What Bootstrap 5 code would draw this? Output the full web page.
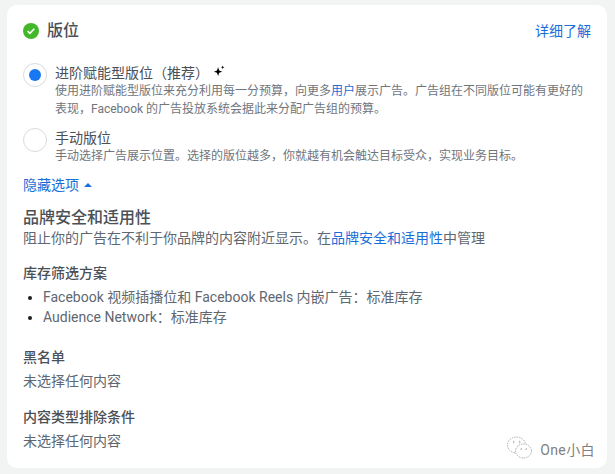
<!DOCTYPE html>
<html lang="zh-CN">
<head>
    <meta charset="UTF-8">
    <title>版位</title>
    <link rel="stylesheet" href="https://cdn.jsdelivr.net/npm/bootstrap@5.3.0/dist/css/bootstrap.min.css">
    <style>
        html, body { height: 100%; overflow: hidden; }
        body {
            background: #f2f3f3;
            font-family: Roboto, "Noto Sans CJK SC", sans-serif;
            color: #606770;
            font-size: 14px;
            line-height: 20px;
        }
        a { color: #1a6ed8; text-decoration: none; }
        .page-wrap { padding: 5px 8px 6px 7px; height: 474px; }
        .place-card {
            background: #fff;
            border-radius: 10px;
            height: 463px;
            padding: 16px 16px 0;
            position: relative;
        }
        .title-row { height: 20px; margin-bottom: 23px; }
        .title-text { font-size: 16px; font-weight: 500; color: #4b4f56; }
        .check-icon { width: 16px; height: 16px; display: block; }
        .radio-ring {
            width: 24px;
            height: 24px;
            border: 1px solid #d8dadd;
            border-radius: 50%;
            flex: none;
            margin-top: -1px;
        }
        .radio-dot { width: 12px; height: 12px; background: #1877f2; border-radius: 50%; }
        .opt-title { font-size: 14px; line-height: 19px; color: #4b4f56; }
        .opt-desc { font-size: 12px; line-height: 17.5px; color: #70757c; }
        .opt-row { margin-bottom: 11px; }
        .spark-icon { width: 12px; height: 12px; margin-left: 4px; vertical-align: 1px; }
        .hide-link { line-height: 18px; margin-top: -1px; }
        .caret-up {
            display: inline-block;
            border-left: 4px solid transparent;
            border-right: 4px solid transparent;
            border-bottom: 4px solid #1a6ed8;
            margin-left: 5px;
            vertical-align: 3px;
        }
        .brand-head { font-size: 16px; font-weight: 500; color: #4b4f56; line-height: 20px; margin: 14px 0 0; }
        .sub-head { font-size: 14px; font-weight: 500; color: #4b4f56; line-height: 20px; margin: 0; }
        .brand-note { margin-bottom: 15px; }
        .inv-list { padding-left: 20px; margin: 4px 0 20px; }
        .inv-list li { line-height: 20px; }
        .inv-list li::marker { color: #1c1e21; }
        .block-val { margin-top: 4px; margin-bottom: 16px; }
        .wm-box {
            position: absolute;
            right: 12px;
            bottom: 7px;
            color: #808080;
            font-size: 14px;
            letter-spacing: 0.4px;
            background: #fff;
        }
        .wm-box svg { width: 27px; height: 26px; margin-right: 7px; margin-top: -3px; }
    </style>
</head>
<body>
    <div class="page-wrap">
        <div class="place-card">
            <div class="d-flex align-items-center justify-content-between title-row">
                <div class="d-flex align-items-center gap-2">
                    <svg class="check-icon" viewBox="0 0 16 16">
                        <circle cx="8" cy="8" r="8" fill="#42b72a"/>
                        <path d="M4.6 8.2l2.3 2.2 4.4-4.6" fill="none" stroke="#fff" stroke-width="1.6"/>
                    </svg>
                    <span class="title-text">版位</span>
                </div>
                <a href="#">详细了解</a>
            </div>

            <div class="d-flex gap-2 opt-row">
                <div class="radio-ring d-flex align-items-center justify-content-center">
                    <div class="radio-dot"></div>
                </div>
                <div>
                    <div class="opt-title">进阶赋能型版位（推荐）<svg class="spark-icon" viewBox="0 0 13 13"><path d="M5.5 2.5L6.7 6l3.300 1.200-3.300 1.200L5.500 12 4.300 8.400 1 7.200 4.300 6z" fill="#000"/><path d="M10.500 0.500l.5 1.500 1.500.5-1.500.5-.5 1.500-.5-1.500L8.500 2.500l1.500-.5z" fill="#000"/></svg></div>
                    <div class="opt-desc">使用进阶赋能型版位来充分利用每一分预算，向更多<a href="#">用户</a>展示广告。广告组在不同版位可能有更好的表现，Facebook 的广告投放系统会据此来分配广告组的预算。</div>
                </div>
            </div>

            <div class="d-flex gap-2 opt-row">
                <div class="radio-ring"></div>
                <div>
                    <div class="opt-title">手动版位</div>
                    <div class="opt-desc">手动选择广告展示位置。选择的版位越多，你就越有机会触达目标受众，实现业务目标。</div>
                </div>
            </div>

            <div class="hide-link"><a href="#">隐藏选项<span class="caret-up"></span></a></div>

            <h2 class="brand-head">品牌安全和适用性</h2>
            <div class="brand-note">阻止你的广告在不利于你品牌的内容附近显示。在<a href="#">品牌安全和适用性</a>中管理</div>

            <h3 class="sub-head">库存筛选方案</h3>
            <ul class="inv-list">
                <li>Facebook 视频插播位和 Facebook Reels 内嵌广告：标准库存</li>
                <li>Audience Network：标准库存</li>
            </ul>

            <h3 class="sub-head">黑名单</h3>
            <div class="block-val">未选择任何内容</div>

            <h3 class="sub-head">内容类型排除条件</h3>
            <div class="block-val">未选择任何内容</div>

            <div class="wm-box d-flex align-items-center">
                <svg viewBox="0 0 26 26" fill="none" stroke="#999" stroke-width="0.8" stroke-dasharray="1.500 1">
                    <ellipse cx="10" cy="10" rx="9" ry="8"/>
                    <ellipse cx="17" cy="16" rx="8" ry="7" fill="#fff"/>
                    <circle cx="7" cy="7" r="0.7"/>
                    <circle cx="13" cy="7" r="0.7"/>
                    <circle cx="14.500" cy="14" r="0.6"/>
                    <circle cx="19.500" cy="14" r="0.6"/>
                </svg>
                <span>One小白</span>
            </div>
        </div>
    </div>
    <script src="https://cdn.jsdelivr.net/npm/bootstrap@5.3.0/dist/js/bootstrap.bundle.min.js"></script>
</body>
</html>
